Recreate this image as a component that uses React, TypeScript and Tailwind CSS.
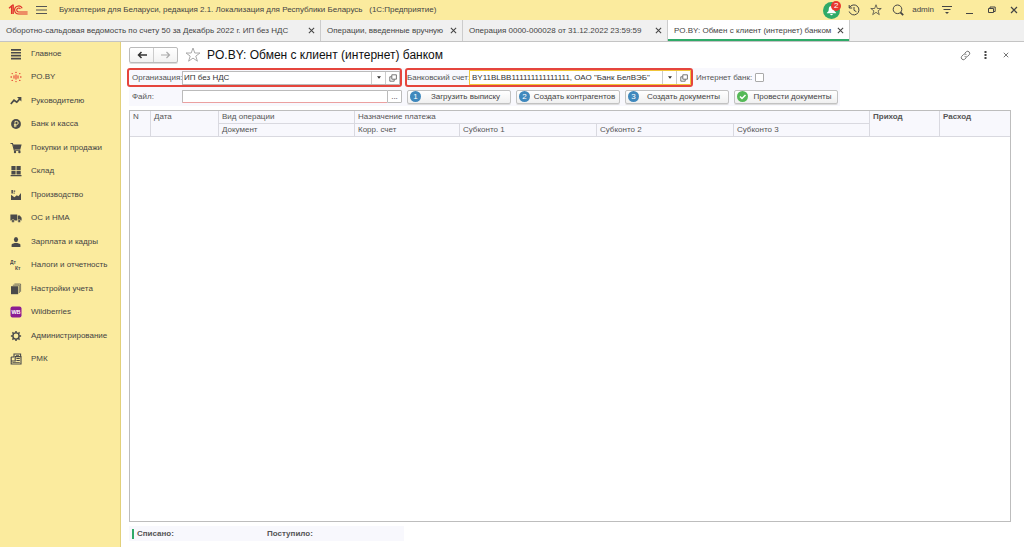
import type { ReactNode } from "react";
import clsx from "clsx";

const sections: { title: string; icon: ReactNode }[] = [
  {
    title: "Главное",
    icon: <path d="M1 1h10v1.7H1zM1 3.9h10v1.7H1zM1 6.8h10v1.7H1zM1 9.7h10v1.7H1z" />,
  },
  {
    title: "PO.BY",
    icon: (
      <g fill="#e5352c">
        <rect x="3.5" y="4.4" width="1" height="3.2" />
        <rect x="5.5" y="3.4" width="1" height="5.2" />
        <rect x="7.5" y="4.4" width="1" height="3.2" />
        <circle cx="6" cy="1.4" r=".7" />
        <circle cx="6" cy="10.6" r=".7" />
        <circle cx="2.2" cy="2.6" r=".7" />
        <circle cx="9.8" cy="2.6" r=".7" />
        <circle cx="2.2" cy="9.4" r=".7" />
        <circle cx="9.8" cy="9.4" r=".7" />
        <circle cx="1.2" cy="6" r=".8" />
        <circle cx="10.8" cy="6" r=".8" />
      </g>
    ),
  },
  {
    title: "Руководителю",
    icon: (
      <>
        <path d="M.8 9 4 5.2l2.8 2L10 3.6" fill="none" stroke="#4a4a4a" strokeWidth="1.7" />
        <path d="M7 2h4.4v4.4z" />
      </>
    ),
  },
  {
    title: "Банк и касса",
    icon: (
      <>
        <circle cx="6" cy="6" r="4.9" />
        <path d="M5 9.2V3.4h1.6a1.6 1.6 0 0 1 0 3.2H3.9M3.9 7.9h2.8" fill="none" stroke="#fbeb9e" strokeWidth=".9" />
      </>
    ),
  },
  {
    title: "Покупки и продажи",
    icon: (
      <>
        <path d="M.5 1.5h2l1.8 6.6h6" fill="none" stroke="#4a4a4a" strokeWidth="1.1" />
        <path d="M3 2.6h8.6l-1.2 4.6H4.2z" />
        <circle cx="5" cy="10" r="1.2" />
        <circle cx="9.4" cy="10" r="1.2" />
      </>
    ),
  },
  {
    title: "Склад",
    icon: <path d="M1.4 1h4.2v4H1.4zM6.5 1h4.2v4H6.5zM1.4 5.8h4.2v3.6H1.4zM6.5 5.8h4.2v3.6H6.5zM.6 10h10.9v1.2H.6z" />,
  },
  {
    title: "Производство",
    icon: <path d="M1 11V5.8l3.4 2.4 2.4-2 1.600 1L11 4v7zM1.400 1h1.500v3.600H1.400zM3.600 1.400h1.600v1.300H3.600zM3.600 3.400h1v1.300h-1z" />,
  },
  {
    title: "ОС и НМА",
    icon: (
      <>
        <path d="M.4 2.4h6.8v6.2H.4zM7.8 3.6h2l1.8 2.2v2.8H7.8z" />
        <circle cx="3" cy="9" r="1.5" stroke="#fbeb9e" strokeWidth=".5" />
        <circle cx="9.2" cy="9" r="1.5" stroke="#fbeb9e" strokeWidth=".5" />
      </>
    ),
  },
  {
    title: "Зарплата и кадры",
    icon: (
      <>
        <ellipse cx="6" cy="3.6" rx="2.1" ry="2.6" />
        <path d="M1.600 11V8.800c0-.8 1.200-1.300 3-1.800h2.800c1.800.5 3 1 3 1.800V11z" />
      </>
    ),
  },
  {
    title: "Налоги и отчетность",
    icon: (
      <g fontFamily="Liberation Sans, sans-serif" fontSize="5" fontWeight="bold">
        <text x="0" y="5">Дт</text>
        <text x="5" y="11">Кт</text>
      </g>
    ),
  },
  {
    title: "Настройки учета",
    icon: (
      <>
        <path d="M1 3.2h7.2v8H1z" />
        <path d="M2.8 2.2h6.5v7.8M4.4 1h6.2v7.8" fill="none" stroke="#4a4a4a" strokeWidth=".7" />
      </>
    ),
  },
  {
    title: "Wildberries",
    icon: (
      <>
        <rect x=".5" y=".5" width="11" height="11" rx="2" fill="#8b1d92" />
        <text x="6" y="8" textAnchor="middle" fill="#fff" fontFamily="Liberation Sans, sans-serif" fontSize="5.5" fontWeight="bold">
          WB
        </text>
      </>
    ),
  },
  {
    title: "Администрирование",
    icon: (
      <>
        <circle cx="6" cy="6" r="3.1" fill="none" stroke="#4a4a4a" strokeWidth="1.4" />
        <path
          d="M6 .9v2M6 9.1v2M.9 6h2M9.1 6h2M2.4 2.4l1.3 1.3M8.3 8.3l1.3 1.3M2.4 9.6l1.3-1.3M8.3 3.7l1.3-1.3"
          stroke="#4a4a4a"
          strokeWidth="1.5"
        />
      </>
    ),
  },
  {
    title: "РМК",
    icon: (
      <>
        <path d="M4 3.6V1h6.6v2.6M1.2 4h3M1.2 4v7h9.8V3.6H5.2V8H1.2" fill="none" stroke="#4a4a4a" strokeWidth="1.1" />
        <path d="M6.4 5h3.4v1.1H6.4zM6.4 7h3.4v1.1H6.4zM2.4 9.2h7.4v.9H2.4zM6 2h3v.8H6z" />
      </>
    ),
  },
];

const tabs = [
  { title: "Оборотно-сальдовая ведомость по счету 50 за Декабрь 2022 г. ИП без НДС", width: "w-[321px]" },
  { title: "Операции, введенные вручную", width: "w-[142px]" },
  { title: "Операция 0000-000028 от 31.12.2022 23:59:59", width: "w-[205px]" },
  { title: "PO.BY: Обмен с клиент (интернет) банком", width: "w-[182px]", active: true },
];

const actions = [
  { title: "Загрузить выписку", step: "1" },
  { title: "Создать контрагентов", step: "2" },
  { title: "Создать документы", step: "3" },
  { title: "Провести документы" },
];

function Cross({ className }: { className?: string }) {
  return (
    <svg viewBox="0 0 8 8" className={className} fill="none" stroke="currentColor" strokeWidth="1.2">
      <path d="M1 1l6 6M7 1 1 7" />
    </svg>
  );
}

function Star({ className }: { className?: string }) {
  return (
    <svg viewBox="0 0 16 16" className={className} fill="none" stroke="currentColor">
      <path d="m8 1 1.8 5H15l-4.2 3.1 1.6 5.1L8 11.1l-4.4 3.1 1.6-5.1L1 6h5.2z" />
    </svg>
  );
}

function OpenIcon() {
  return (
    <svg viewBox="0 0 8 8" className="size-[8px]" fill="none" stroke="#555" strokeWidth=".8">
      <path d="M2.8.8h4.6v4.4H2.8zM2.6 2.8H.8v4.4h4.4V5.4" />
    </svg>
  );
}

function FieldButtons({ name }: { name: string }) {
  return (
    <>
      <button aria-label={`${name}: выбрать`} className="flex w-[14px] shrink-0 items-center justify-center border-l border-[#ccc]">
        <svg viewBox="0 0 6 4" className="h-[3px] w-[4px]" fill="#333">
          <path d="M0 0h6L3 4z" />
        </svg>
      </button>
      <button aria-label={`${name}: открыть`} className="flex w-[14px] shrink-0 items-center justify-center border-l border-[#ccc]">
        <OpenIcon />
      </button>
    </>
  );
}

function TopBar() {
  return (
    <header className="flex h-[20px] items-center bg-[#fbeb9e] pr-[6px] pl-[8px] text-[#444]">
      <svg viewBox="0 0 20 12" className="h-[12px] w-[20px] shrink-0" fill="none" stroke="#e0312b">
        <path d="M1 4.2 3.6 2v8M5.2 10V1.2H4" strokeWidth="1.3" />
        <path d="M14.2 4.2A4 4 0 1 0 10.8 10h8.8" strokeWidth="1.2" />
        <path d="M12.4 5A2 2 0 1 0 10.8 8h8.8" strokeWidth="1.1" />
      </svg>
      <button aria-label="Меню" className="ml-[8px]">
        <svg viewBox="0 0 11 10" className="h-[10px] w-[11px]" stroke="#555">
          <path d="M0 1.5h11M0 5h11M0 8.5h11" />
        </svg>
      </button>
      <span className="ml-[12px] whitespace-pre">
        Бухгалтерия для Беларуси, редакция 2.1. Локализация для Республики Беларусь{"   "}(1С:Предприятие)
      </span>
      <div className="ml-auto flex items-center">
        <button aria-label="Уведомления" className="relative flex size-[17px] items-center justify-center rounded-full bg-[#2faa68]">
          <svg viewBox="0 0 12 12" className="size-[11px]" fill="#fff">
            <path d="M6 1c2.4 0 3 1.8 3 4 0 1.8.8 2.6 2 3.4V9H1v-.6C2.2 7.6 3 6.800 3 5c0-2.200.6-4 3-4zM4.600 9.800h2.800a1.400 1.400 0 0 1-2.800 0z" />
          </svg>
          <span className="absolute -top-px -right-px flex size-[10px] items-center justify-center rounded-full bg-[#e8382f] text-white">
            2
          </span>
        </button>
        <button aria-label="История" className="ml-[8px]">
          <svg viewBox="0 0 12 12" className="size-[12px]" fill="none" stroke="currentColor">
            <path d="M1.5 3.6A5 5 0 1 1 1.2 7.5M1.2 1v3h3M6 3v3.3l2.4 1.4" />
          </svg>
        </button>
        <button aria-label="Избранное" className="ml-[10px]"><Star className="size-[12px]" /></button>
        <button aria-label="Поиск" className="ml-[10px]">
          <svg viewBox="0 0 12 12" className="size-[12px]" fill="none" stroke="currentColor">
            <circle cx="5.5" cy="5.3" r="4.3" />
            <path d="m8.4 8.4 2.8 2.8" strokeWidth="1.8" />
          </svg>
        </button>
        <button className="ml-[8px]">admin</button>
        <button aria-label="Настройка" className="ml-[8px]">
          <svg viewBox="0 0 10 10" className="size-[10px]" stroke="currentColor">
            <path d="M0 1.5h10M1.5 4.5h7" />
            <path d="M3 7h4L5 9z" fill="currentColor" stroke="none" />
          </svg>
        </button>
        <button aria-label="Свернуть" className="ml-[14px]">
          <svg viewBox="0 0 7 8" className="h-[8px] w-[7px]" stroke="currentColor"><path d="M0 7.5h7" /></svg>
        </button>
        <button aria-label="Развернуть" className="ml-[15px]">
          <svg viewBox="0 0 8 8" className="size-[8px]" fill="none" stroke="currentColor">
            <path d="M.5 2.5h5v4h-5zM2 2V1h5.2v4.5H6" />
          </svg>
        </button>
        <button aria-label="Закрыть" className="ml-[14px]"><Cross className="size-[8px]" /></button>
      </div>
    </header>
  );
}

function TabBar() {
  return (
    <nav className="flex h-[22px] border-b border-[#c4c4c4] bg-[#f0f0f0]">
      {tabs.map((tab) => (
        <div
          key={tab.title}
          className={clsx(
            "flex items-center justify-between border-r border-[#ccc] pr-[5px] pl-[6px]",
            tab.width,
            tab.active && "bg-white shadow-[inset_0_-2px_0_#2faa68]",
          )}
        >
          <a href="#" className="whitespace-nowrap">{tab.title}</a>
          <button aria-label="Закрыть вкладку"><Cross className="size-[7px]" /></button>
        </div>
      ))}
    </nav>
  );
}

function SideBar() {
  return (
    <nav className="w-[121px] shrink-0 border-r border-[#e2d07a] bg-[#fbeb9e]">
      <ul className="grid h-[329px] auto-rows-fr">
        {sections.map((section) => (
          <li key={section.title} className="flex">
            <a href="#" className="flex items-center gap-[9px] pl-[10px] whitespace-nowrap">
              <svg viewBox="0 0 12 12" className="size-[12px] shrink-0" fill="#4a4a4a">{section.icon}</svg>
              {section.title}
            </a>
          </li>
        ))}
      </ul>
    </nav>
  );
}

function Heading() {
  return (
    <div className="flex h-[26px] items-center">
      <div className="flex h-[16px] w-[49px] rounded-xs border border-[#bbb] bg-linear-to-b from-white to-[#f2f2f2] shadow-[0_1px_0_#ddd]">
        <button aria-label="Назад" className="flex flex-1 items-center justify-center border-r border-[#ccc] text-[#333]">
          <svg viewBox="0 0 10 8" className="h-[8px] w-[10px]" fill="none" stroke="currentColor" strokeWidth="1.5">
            <path d="M10 4H1.5M4.5 1l-3 3 3 3" />
          </svg>
        </button>
        <button aria-label="Вперед" className="flex flex-1 items-center justify-center text-[#aaa]">
          <svg viewBox="0 0 10 8" className="h-[8px] w-[10px]" fill="none" stroke="currentColor" strokeWidth="1.2">
            <path d="M0 4h8.5M5.5 1l3 3-3 3" />
          </svg>
        </button>
      </div>
      <button aria-label="В избранное" className="ml-[7px] text-[#aaa]"><Star className="size-[16px]" /></button>
      <h1 className="ml-[6px] text-[12px] whitespace-nowrap text-[#111]">PO.BY: Обмен с клиент (интернет) банком</h1>
      <div className="ml-auto flex items-center pr-[2px] text-[#666]">
        <button aria-label="Ссылка">
          <svg viewBox="0 0 12 12" className="size-[11px]" fill="none" stroke="currentColor">
            <path d="M5.2 3.6 7 1.8a2.3 2.3 0 0 1 3.2 3.2L8.2 7a2.2 2.2 0 0 1-3.2 0M6.8 8.4 5 10.2A2.3 2.3 0 0 1 1.8 7l2-2A2.2 2.2 0 0 1 7 5" />
          </svg>
        </button>
        <button aria-label="Еще" className="ml-[13px]">
          <svg viewBox="0 0 3 8" className="h-[8px] w-[3px]" fill="#444">
            <path d="M.5 0h2v2h-2zM.5 3h2v2h-2zM.5 6h2v2h-2z" />
          </svg>
        </button>
        <button aria-label="Закрыть форму" className="ml-[16px]"><Cross className="size-[6px]" /></button>
      </div>
    </div>
  );
}

function ExchangeForm() {
  return (
    <form className="w-fit bg-[#f8f8fd] pr-[2px] text-[#555]" onSubmit={(e) => e.preventDefault()}>
      <div className="-ml-[2px] flex items-center gap-[3px]">
        <div className="flex h-[19px] w-[275px] items-center rounded-[3px] border-2 border-[#e5453d] pl-[3px]">
          <label htmlFor="org" className="w-[50px] whitespace-nowrap">Организация:</label>
          <div className="flex h-[14px] flex-1 border border-[#bbb] bg-white">
            <input id="org" defaultValue="ИП без НДС" className="min-w-0 flex-1 px-px text-[#333] outline-none" />
            <FieldButtons name="Организация" />
          </div>
        </div>
        <div className="flex h-[19px] w-[288px] items-center rounded-[3px] border-2 border-[#e5453d]">
          <label htmlFor="account" className="w-[62px] whitespace-nowrap">Банковский счет:</label>
          <div className="flex h-[15px] flex-1 border border-[#f0c53a] bg-white">
            <input
              id="account"
              defaultValue='BY11BLBB111111111111111, ОАО "Банк БелВЭБ"'
              className="min-w-0 flex-1 px-[2px] text-[#333] outline-none"
            />
            <FieldButtons name="Банковский счет" />
          </div>
        </div>
        <label className="flex items-center gap-[3px] whitespace-nowrap">
          Интернет банк:
          <input type="checkbox" className="size-[9px] appearance-none rounded-[1px] border border-[#aaa] bg-white" />
        </label>
      </div>
      <div className="flex h-[19px] items-center gap-[5px] pl-[3px]">
        <div className="flex w-[270px] items-center">
          <label htmlFor="file" className="w-[50px]">Файл:</label>
          <div className="flex h-[13px] flex-1">
            <input
              id="file"
              className="min-w-0 flex-1 rounded-l-[1px] border border-r-0 border-[#bbb] border-b-[#eba0a0] bg-white px-px outline-none"
            />
            <button
              aria-label="Выбрать файл"
              className="flex w-[15px] items-center justify-center rounded-r-[1px] border border-[#bbb] bg-white text-[#333]"
            >
              ...
            </button>
          </div>
        </div>
        {actions.map((action) => (
          <button
            key={action.title}
            className="flex h-[14px] w-[104px] items-center rounded-xs border border-[#c2c2c2] bg-linear-to-b from-white to-[#f0f0f0] pl-[2px] whitespace-nowrap text-[#444] shadow-[0_1px_0_#ddd]"
          >
            {action.step ? (
              <span className="flex size-[11px] shrink-0 items-center justify-center rounded-full bg-[#3f88bd] text-white">
                {action.step}
              </span>
            ) : (
              <svg viewBox="0 0 11 11" className="size-[11px] shrink-0" fill="none">
                <circle cx="5.5" cy="5.5" r="5.5" fill="#55b957" />
                <path d="m3 5.5 2 2 3.5-3.5" stroke="#fff" strokeWidth="1.5" />
              </svg>
            )}
            <span className="flex-1 text-center">{action.title}</span>
          </button>
        ))}
      </div>
    </form>
  );
}

function Statement() {
  const cell = "border-r border-b border-[#d9d9e0] px-[3px] text-left align-top font-normal";
  return (
    <div className="mt-[4px] flex-1 border border-[#bdbdbd]">
      <table className="w-full table-fixed border-separate border-spacing-0 bg-[#f8f8fd] text-[#555]">
        <colgroup>
          <col className="w-[21px]" />
          <col className="w-[68px]" />
          <col className="w-[136px]" />
          <col className="w-[105px]" />
          <col className="w-[137px]" />
          <col className="w-[137px]" />
          <col className="w-[136px]" />
          <col className="w-[70px]" />
          <col />
        </colgroup>
        <thead className="leading-[12px]">
          <tr>
            <th rowSpan={2} className={cell}>N</th>
            <th rowSpan={2} className={cell}>Дата</th>
            <th className={cell}>Вид операции</th>
            <th colSpan={4} className={cell}>Назначение платежа</th>
            <th rowSpan={2} className={cell}><b>Приход</b></th>
            <th rowSpan={2} className="border-b border-[#d9d9e0] px-[3px] text-left align-top font-bold">Расход</th>
          </tr>
          <tr>
            <th className={cell}>Документ</th>
            <th className={cell}>Корр. счет</th>
            <th className={cell}>Субконто 1</th>
            <th className={cell}>Субконто 2</th>
            <th className={cell}>Субконто 3</th>
          </tr>
        </thead>
      </table>
    </div>
  );
}

export default function App() {
  return (
    <div className="flex min-h-screen flex-col bg-white font-['Liberation_Sans',Arial,sans-serif] text-[8px] leading-[10px] text-[#444]">
      <TopBar />
      <TabBar />
      <div className="flex flex-1">
        <SideBar />
        <main className="flex min-w-0 flex-1 flex-col pr-[13px] pl-[8px]">
          <Heading />
          <ExchangeForm />
          <Statement />
          <footer className="mt-[4px] mb-[6px] flex h-[15px] w-[275px] items-center bg-[#f8f8fd] pl-[3px] font-bold text-[#555]">
            <span className="w-[135px] border-l-2 border-[#2faa68] pl-[3px]">Списано:</span>
            <span>Поступило:</span>
          </footer>
        </main>
      </div>
    </div>
  );
}
